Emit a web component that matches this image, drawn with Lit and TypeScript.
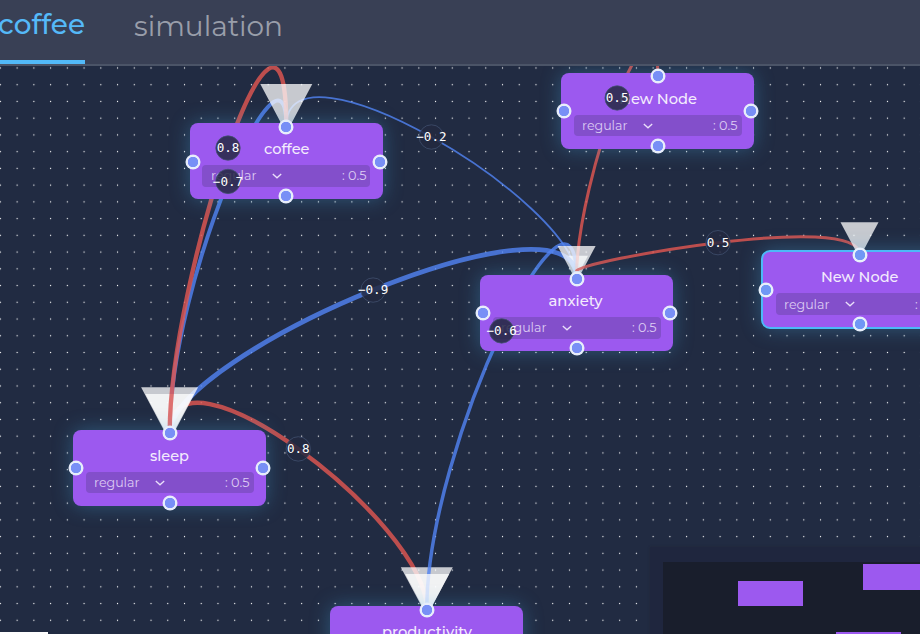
import { LitElement, html, css, svg } from "lit";
import { customElement, property } from "lit/decorators.js";
import { styleMap } from "lit/directives/style-map.js";
import { classMap } from "lit/directives/class-map.js";

interface GraphNode { name: string; nameWidth: number; x: number; y: number; shift?: number; selected?: boolean; }
interface Edge {
  from: [number, number]; c1: number; c2: number; to: [number, number];
  weight: number; tipX: number; baseY: number;
}

// x is the horizontal centre of a node, y its top edge, in canvas coordinates
const NODES: GraphNode[] = [
  { name: "coffee", nameWidth: 45.5, x: 286.3, y: 57.4 },
  { name: "New Node", nameWidth: 78, x: 657.8, y: 7.2 },
  { name: "anxiety", nameWidth: 54, x: 576.5, y: 209.3, shift: -1.5 },
  { name: "New Node", nameWidth: 77.5, x: 859.6, y: 185.5, selected: true },
  { name: "sleep", nameWidth: 39, x: 169.6, y: 364 },
  { name: "productivity", nameWidth: 90, x: 426.8, y: 540.3 },
];

const EDGES: Edge[] = [
  { from: [169.7, 367], c1: 262.6, c2: 455, to: [426.8, 543.5], weight: 0.8, tipX: 426.8, baseY: 501.2 },
  { from: [286.3, 60], c1: -37.3, c2: 136, to: [576.5, 212], weight: -0.2, tipX: 577, baseY: 189.7 },
  { from: [169.7, 367], c1: 289.5, c2: 115, to: [576.5, 212], weight: -0.9, tipX: 169.6, baseY: 321.3 },
  { from: [169.7, 367], c1: 213.5, c2: -48, to: [286.3, 60], weight: -0.7, tipX: 169.6, baseY: 328 },
  { from: [576.5, 212], c1: 77, c2: 377.7, to: [426.8, 543.5], weight: -0.6, tipX: 427.2, baseY: 508 },
  { from: [576.5, 212], c1: 111, c2: -99.7, to: [657.8, 10], weight: 0.5, tipX: 576.6, baseY: 180 },
  { from: [576.5, 205], c1: 196, c2: 144, to: [859.5, 188.5], weight: 0.5, tipX: 859.5, baseY: 156.2 },
  { from: [169.7, 367], c1: 213.5, c2: -137, to: [286.3, 60], weight: 0.8, tipX: 286.3, baseY: 18 },
];

const MARKER: Record<string, number> = { "0.2": 22, "0.5": 38, "0.6": 44, "0.7": 48.5, "0.8": 52, "0.9": 57 };

const fitted = (text: string, width: number, size: number, weight = 400, height = size * 1.4, x = 0) => html`
  <svg class="fit" width=${width} height=${height}>
    <text x=${x} y=${height * 0.74} font-size=${size} font-weight=${weight}
      textLength=${width} lengthAdjust="spacingAndGlyphs">${text}</text>
  </svg>`;

const fitStyles = css`
  .fit { display: block; overflow: visible; flex: none; font-family: Montserrat, Inter, sans-serif; fill: currentColor; }
`;

@customElement("flow-node")
export class FlowNode extends LitElement {
  @property() name = "";
  @property({ type: Number }) nameWidth = 50;
  @property({ type: Number }) shift = 0;
  @property({ type: Boolean }) selected = false;

  static styles = [fitStyles, css`
    :host { display: block; }
    .box {
      position: relative; box-sizing: content-box; width: 193px; height: 75.6px;
      border-radius: 8px; background: #9c59ef; color: #f3ebfd;
      box-shadow: 0 0 20px rgba(72, 176, 232, 0.34);
      display: flex; flex-direction: column; align-items: center;
    }
    .selected { border: 2px solid #4cb9f7; border-radius: 9px; }
    .title { padding-top: 16px; height: 27px; box-sizing: border-box; margin-bottom: 14.8px; }
    .selected .title { padding-top: 15.4px; }
    .row {
      box-sizing: border-box; width: 168px; height: 21.5px; padding: 0 4.2px 0 8.5px;
      border-radius: 4px; background: #834fcb; color: #ddccf3;
      display: flex; align-items: center;
    }
    .chevron { margin-left: 15.4px; flex: none; }
    .value { margin-left: auto; }
    .handle {
      position: absolute; box-sizing: border-box; width: 15px; height: 15px;
      border-radius: 50%; background: radial-gradient(circle, #788ff6 4.9px, #e7edfb 5.5px);
      transform: translate(-50%, -50%);
    }
    .selected .handle { background: radial-gradient(circle, #7098f5 4.9px, #e7f0fb 5.5px); }
    .top { left: 50%; top: 3.3px; }
    .bottom { left: 50%; top: 72.9px; }
    .left { left: 3px; top: 38.2px; }
    .right { left: 190px; top: 38.2px; }
  `];

  render() {
    return html`
      <div class=${classMap({ box: true, selected: this.selected })}>
        <div class="title">${fitted(this.name, this.nameWidth, 14.6, 500, 20.44, this.shift)}</div>
        <div class="row">
          ${fitted("regular", 45.5, 12.2, 400)}
          <svg class="chevron" width="10" height="6" viewBox="0 0 10 6">
            <path d="M0.8 0.9 L5 4.8 L9.2 0.9" fill="none" stroke="#eadffa" stroke-width="1.3" />
          </svg>
          <div class="value">${fitted(": 0.5", 24.5, 12.2, 400)}</div>
        </div>
        <i class="handle top"></i><i class="handle bottom"></i>
        <i class="handle left"></i><i class="handle right"></i>
      </div>`;
  }
}

@customElement("app-root")
export class AppRoot extends LitElement {
  static styles = [fitStyles, css`
    :host {
      display: flex; flex-direction: column; width: 920px; height: 634px;
      overflow: hidden; background: #212b42; font-family: Montserrat, Inter, sans-serif;
    }
    .tabs {
      flex: none; box-sizing: border-box; height: 66px; display: flex; gap: 48.5px;
      background: #394055; border-bottom: 2px solid #4b5467;
    }
    .tab { box-sizing: border-box; height: 64px; padding-top: 6px; color: #999eaa; }
    .tab.active { width: 85px; padding-top: 4px; color: #55b9f8; border-bottom: 4px solid #52b9f8; }
    .tab.active .fit { margin-left: -1.6px; }
    .canvas { position: relative; flex: 1; overflow: hidden; }
    .layer { position: absolute; inset: 0; display: block; }
    .edge { fill: none; opacity: 0.82; }
    .positive { stroke: #df5751; }
    .negative { stroke: #5082f0; }
    .marker { fill: #ffffff; opacity: 0.75; }
    .place { position: absolute; }
    .bubble { fill: rgba(34, 41, 64, 0.84); stroke: rgba(66, 82, 112, 0.75); stroke-width: 1; }
    .weight { fill: #ffffff; font: 12.6px "DejaVu Sans Mono", monospace; text-anchor: middle; }
    .map {
      position: absolute; right: 0; bottom: 0; box-sizing: border-box; width: 270px; height: 87px;
      padding: 14.5px 0 0 12.5px; background: #1f263e; box-shadow: 0 0 2px rgba(36, 40, 56, 0.9);
    }
    .map-view { display: block; background: #191e2c; }
    .toolbar { position: absolute; left: 0; bottom: 0; width: 48px; height: 2px; background: #fefefe; }
  `];

  private path(e: Edge) {
    return `M${e.from[0]} ${e.from[1]} C${e.from[0]} ${e.c1} ${e.to[0]} ${e.c2} ${e.to[0]} ${e.to[1]}`;
  }

  private edge(e: Edge) {
    const w = Math.abs(e.weight);
    const half = MARKER[String(w)] / 2;
    return svg`
      <path class="edge ${e.weight > 0 ? "positive" : "negative"}" d=${this.path(e)} stroke-width=${0.9 + w * 4.3} />
      <path class="marker" d="M${e.tipX - half} ${e.baseY} H${e.tipX + half} L${e.tipX} ${e.baseY + half * 1.88} Z" />`;
  }

  private label(e: Edge) {
    const x = (e.from[0] + e.to[0]) / 2;
    const y = (e.from[1] + 3 * e.c1 + 3 * e.c2 + e.to[1]) / 8;
    return svg`
      <circle class="bubble" cx=${x} cy=${y} r="12.2" />
      <text class="weight" x=${x} y=${y + 4.3}>${String(e.weight).replace("-", "−")}</text>`;
  }

  render() {
    return html`
      <nav class="tabs">
        <div class="tab active">${fitted("coffee", 87, 28, 500, 40)}</div>
        <div class="tab">${fitted("simulation", 149, 28, 400, 41)}</div>
      </nav>
      <main class="canvas">
        <svg class="layer" width="920" height="568">
          <defs>
            <pattern id="dots" width="16.737" height="16.737" patternUnits="userSpaceOnUse" x="-8" y="-6.4">
              <circle cx="8.4" cy="8.35" r="0.64" fill="#ffffff" />
            </pattern>
          </defs>
          <rect width="920" height="568" fill="url(#dots)" />
        </svg>
        <svg class="layer" width="920" height="568">${EDGES.map((e) => this.edge(e))}</svg>
        ${NODES.map((n) => html`
          <flow-node class="place" .name=${n.name} .nameWidth=${n.nameWidth} .shift=${n.shift ?? 0} .selected=${!!n.selected}
            style=${styleMap({ left: `${n.x - (n.selected ? 98.5 : 96.5)}px`, top: `${n.y - (n.selected ? 2 : 0)}px` })}></flow-node>`)}
        <svg class="layer" width="920" height="568">${EDGES.map((e) => this.label(e))}</svg>
        <div class="map">
          <svg class="map-view" width="257.5" height="72.5" shape-rendering="crispEdges">
            <g fill="#9c59ef">
              <rect x="75.4" y="19.4" width="65" height="25" />
              <rect x="200.4" y="2.4" width="65" height="26" />
              <rect x="173.4" y="70.4" width="65" height="26" />
            </g>
          </svg>
        </div>
        <div class="toolbar"></div>
      </main>`;
  }
}
